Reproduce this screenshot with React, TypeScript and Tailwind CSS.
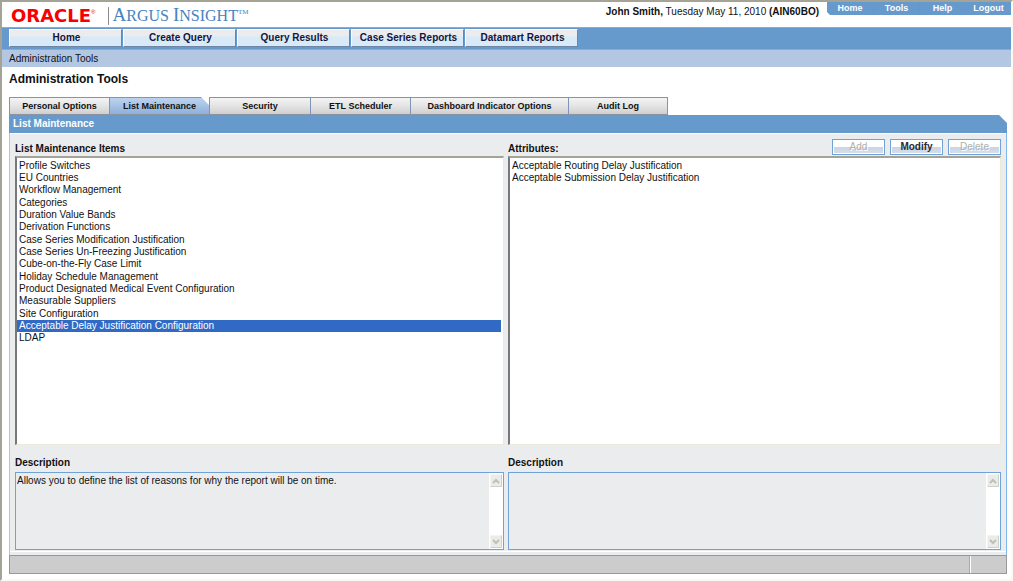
import React, { useState } from "react";

const ITEMS = [
  "Profile Switches",
  "EU Countries",
  "Workflow Management",
  "Categories",
  "Duration Value Bands",
  "Derivation Functions",
  "Case Series Modification Justification",
  "Case Series Un-Freezing Justification",
  "Cube-on-the-Fly Case Limit",
  "Holiday Schedule Management",
  "Product Designated Medical Event Configuration",
  "Measurable Suppliers",
  "Site Configuration",
  "Acceptable Delay Justification Configuration",
  "LDAP",
];

const ATTRIBUTES = [
  "Acceptable Routing Delay Justification",
  "Acceptable Submission Delay Justification",
];

const NAV = ["Home", "Create Query", "Query Results", "Case Series Reports", "Datamart Reports"];

const TABS = [
  { label: "Personal Options", width: "w-[100px]" },
  { label: "List Maintenance", width: "w-[100px]" },
  { label: "Security", width: "w-[101px]" },
  { label: "ETL Scheduler", width: "w-[100px]" },
  { label: "Dashboard Indicator Options", width: "w-[158px]" },
  { label: "Audit Log", width: "w-[100px]" },
];

function Logo() {
  return (
    <div className="flex h-full items-center pt-0.5 pl-[9px]">
      <span className="font-['DejaVu_Sans'] text-[18px] leading-5 font-bold text-[#f80000]">ORACLE</span>
      <span className="self-start pt-0.5 text-[6px] leading-3 text-[#f80000]">®</span>
      <span className="ml-3 h-[18px] w-px bg-[#8c8c8c]" />
      <span className="ml-1 flex items-baseline font-['Liberation_Serif'] leading-5 whitespace-pre text-[#4583c0]">
        <span className="text-[19px]">A</span>
        <span className="text-[16px]">RGUS </span>
        <span className="text-[19px]">I</span>
        <span className="text-[16px]">NSIGHT</span>
        <sup className="self-start pt-1 text-[7px] leading-3">TM</sup>
      </span>
    </div>
  );
}

function TopMenu() {
  return (
    <nav
      aria-label="Session"
      className="flex h-[13px] bg-[#6699cc] text-[9px] leading-3 font-bold text-white [clip-path:polygon(0_0,100%_0,100%_100%,3px_100%,0_calc(100%-3px))]"
    >
      {["Home", "Tools", "Help", "Logout"].map((label) => (
        <a
          key={label}
          href="#"
          className="w-[46px] border-l border-[#868ea6] text-center first:border-l-0"
        >
          {label}
        </a>
      ))}
    </nav>
  );
}

function ActionButton({ label, disabled }: { label: string; disabled?: boolean }) {
  return (
    <button
      type="button"
      disabled={disabled}
      className="h-4 w-[53px] border border-[#6fa3d8] bg-[linear-gradient(#ffffff_50%,#c9d3e4_50%,#d9dfea)] text-[10px] leading-3 font-bold text-[#2a2a33] shadow-[inset_0_0_0_1px_#ffffff] disabled:font-normal disabled:text-[#aeb0ac] disabled:[text-shadow:1px_1px_0_#ffffff]"
    >
      {label}
    </button>
  );
}

function ListBox({ id, options, value, onChange }: {
  id: string;
  options: string[];
  value: string[];
  onChange: (v: string[]) => void;
}) {
  return (
    <select
      id={id}
      multiple
      size={15}
      value={value}
      onChange={(e) => onChange(Array.from(e.target.selectedOptions, (o) => o.value))}
      className="block h-[289px] w-full overflow-hidden rounded-none border-t-2 border-r border-b border-l-2 border-t-[#a5a396] border-r-[#ece9d8] border-b-[#ece9d8] border-l-[#77787c] bg-white py-0.5 pr-0.5 pl-0 text-[10px] leading-3 text-[#111] outline-none"
    >
      {options.map((o) => (
        <option
          key={o}
          value={o}
          className="h-3 min-h-0 px-0.5 py-0 checked:bg-[#316ac5] checked:bg-[linear-gradient(#316ac5,#316ac5)] checked:text-white nth-[3n]:h-[13px]"
        >
          {o}
        </option>
      ))}
    </select>
  );
}

function Chevron({ down }: { down?: boolean }) {
  return (
    <svg viewBox="0 0 8 6" className="h-1.5 w-2" fill="none" stroke="#bfbfb8" strokeWidth="2">
      <path d={down ? "M1 1 4 4 7 1" : "M1 5 4 2 7 5"} />
    </svg>
  );
}

function DescriptionBox({ id, text }: { id: string; text: string }) {
  const arrow =
    "flex h-[13px] w-3 items-center justify-center border border-r-[#d0d0ca] border-b-[#d0d0ca] border-t-[#f4f4f2] border-l-[#f4f4f2] bg-[#ebebe8]";
  return (
    <div className="flex h-[78px] border border-[#6fa3d8]">
      <textarea
        id={id}
        readOnly
        value={text}
        className="min-w-0 flex-1 resize-none overflow-hidden bg-[#ebecee] px-px py-0.5 text-[10px] leading-3 text-[#111] outline-none"
      />
      <div className="flex w-[14px] flex-col items-center justify-between bg-white py-px">
        <button type="button" aria-label="Scroll up" className={arrow}>
          <Chevron />
        </button>
        <button type="button" aria-label="Scroll down" className={arrow}>
          <Chevron down />
        </button>
      </div>
    </div>
  );
}

export default function App() {
  const [item, setItem] = useState(["Acceptable Delay Justification Configuration"]);
  const [attribute, setAttribute] = useState<string[]>([]);

  return (
    <div className="border-t-2 border-r-2 border-b-2 border-l-2 border-t-[#a5a396] border-r-[#fafaee] border-b-[#fafaee] border-l-[#a5a396] bg-white pb-[5px] font-['Liberation_Sans',sans-serif] text-[#111]">
      <header className="flex h-[25px] items-start justify-between">
        <Logo />
        <div className="flex">
          <p className="pt-1 pr-2 text-[10px] leading-3">
            <b>John Smith,</b> Tuesday May 11, 2010 <b>(AIN60BO)</b>
          </p>
          <TopMenu />
        </div>
      </header>

      <nav aria-label="Main" className="flex h-[23px] gap-px border-y border-y-[#82addb] bg-[#6699cc] px-[7px] pt-px">
        {NAV.map((label) => (
          <button
            key={label}
            type="button"
            className="h-[18px] w-[113px] border border-t-white border-r-[#6d86a8] border-b-[#6d86a8] border-l-white bg-[linear-gradient(#ececee_35%,#d8eaf7_45%)] pl-0.5 text-[10px] leading-3 font-bold whitespace-nowrap text-[#14143c]"
          >
            {label}
          </button>
        ))}
      </nav>

      <div className="h-[17px] bg-[#b3c7e3] px-[7px] pt-0.5 text-[10px] leading-[14px]">Administration Tools</div>

      <main className="pr-1 pl-[7px]">
        <h1 className="pt-1 text-[12px] leading-4 font-bold">Administration Tools</h1>

        <div role="tablist" className="mt-[10px] flex h-[18px]">
          {TABS.map(({ label, width }) => {
            const active = label === "List Maintenance";
            return (
              <button
                key={label}
                type="button"
                role="tab"
                aria-selected={active}
                className={
                  width +
                  " shrink-0 border-y border-l border-t-[#7f95b5] border-b-[#8b93a0] border-l-[#7f95b5] text-[9px] leading-3 font-bold whitespace-nowrap last:border-r last:border-r-[#7f95b5] " +
                  (active
                    ? "bg-[linear-gradient(#bcd3ef,#8fb0da)] [clip-path:polygon(0_0,calc(100%-8px)_0,100%_8px,100%_100%,0_100%)]"
                    : "bg-[linear-gradient(#f4f4f4,#e4e4e4_50%,#cfcfcf)]")
                }
              >
                {label}
              </button>
            );
          })}
        </div>

        <section>
          <h2 className="h-[18px] bg-[#6699cc] pl-1 text-[10px] leading-[18px] font-bold text-white [clip-path:polygon(0_0,calc(100%-8px)_0,100%_8px,100%_100%,0_100%)]">
            List Maintenance
          </h2>
          <div className="border-r border-l border-r-[#80b8f0] border-l-[#99ccf5] bg-[#ebecee] pb-[3px]">
            <div className="grid grid-cols-[489fr_493fr] gap-x-1 border-y border-y-white px-[5px] pb-px">
              <div>
                <div className="flex h-[22px] items-end">
                  <label htmlFor="items" className="pb-px text-[10px] leading-3 font-bold">
                    List Maintenance Items
                  </label>
                </div>
                <ListBox id="items" options={ITEMS} value={item} onChange={setItem} />
              </div>
              <div>
                <div className="flex h-[22px] items-end justify-between">
                  <label htmlFor="attributes" className="pb-px text-[10px] leading-3 font-bold">
                    Attributes:
                  </label>
                  <div className="flex gap-[5px] pb-px">
                    <ActionButton label="Add" disabled />
                    <ActionButton label="Modify" />
                    <ActionButton label="Delete" disabled />
                  </div>
                </div>
                <ListBox id="attributes" options={ATTRIBUTES} value={attribute} onChange={setAttribute} />
              </div>
              <div className="pt-3">
                <label htmlFor="item-description" className="block pb-[3px] text-[10px] leading-3 font-bold">
                  Description
                </label>
                <DescriptionBox id="item-description" text="Allows you to define the list of reasons for why the report will be on time." />
              </div>
              <div className="pt-3">
                <label htmlFor="attribute-description" className="block pb-[3px] text-[10px] leading-3 font-bold">
                  Description
                </label>
                <DescriptionBox id="attribute-description" text="" />
              </div>
            </div>
          </div>
        </section>

        <footer className="flex h-[19px] border border-[#999999] bg-[#cccccc]">
          <div className="flex-1" />
          <div className="w-9 border-l border-l-white shadow-[-1px_0_0_#aaaaaa]" />
        </footer>
      </main>
    </div>
  );
}
